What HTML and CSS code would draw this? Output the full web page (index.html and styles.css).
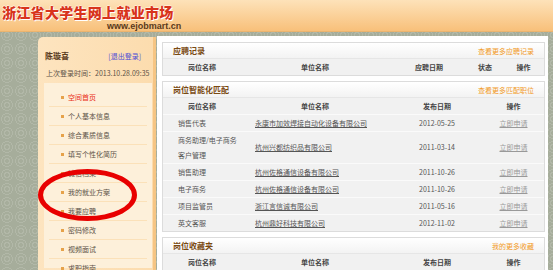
FILE: index.html
```html
<!DOCTYPE html>
<html lang="zh-cn">
<head>
    <meta charset="UTF-8">
    <meta name="viewport" content="width=device-width, initial-scale=1.0">
    <title>浙江省大学生网上就业市场</title>
    <link rel="stylesheet" href="styles.css">
</head>
<body>

    <!-- 顶部 -->
    <div class="topo">
        <div class="logo">浙江省大学生网上就业市场</div>
        <div class="site">www.ejobmart.cn</div>
    </div>

    <div class="corpo">
        <!-- 左侧菜单 -->
        <div class="lateral">
            <div class="usuario">
                <span class="nome">陈璇喜</span>
                <a class="sair" href="#">[退出登录]</a>
            </div>
            <div class="ultimo">上次登录时间：2013.10.28.09:35</div>
            <ul class="menu">
                <li class="ativo">空间首页</li>
                <li>个人基本信息</li>
                <li>综合素质信息</li>
                <li>填写个性化简历</li>
                <li>诚信档案</li>
                <li>我的就业方案</li>
                <li>我要应聘</li>
                <li>密码修改</li>
                <li>视频面试</li>
                <li>求职指南</li>
            </ul>
        </div>

        <!-- 内容 -->
        <div class="conteudo">
            <div class="painel">
                <div class="titulo">
                    <span>应聘记录</span>
                    <a href="#">查看更多应聘记录</a>
                </div>
                <div class="linha cab cinco">
                    <div class="c1">岗位名称</div>
                    <div class="c2">单位名称</div>
                    <div class="meio">应聘日期</div>
                    <div class="meio">状态</div>
                    <div class="meio">操作</div>
                </div>
            </div>

            <div class="painel">
                <div class="titulo">
                    <span>岗位智能化匹配</span>
                    <a href="#">查看更多匹配职位</a>
                </div>
                <div class="linha cab quatro">
                    <div class="c1">岗位名称</div>
                    <div class="c2">单位名称</div>
                    <div class="meio">发布日期</div>
                    <div class="meio">操作</div>
                </div>
                <div class="linha dado quatro">
                    <div class="d1">销售代表</div>
                    <div class="d2"><a href="#">永康市加效焊接自动化设备有限公司</a></div>
                    <div class="meio">2012-05-25</div>
                    <div class="meio"><a class="pedir" href="#">立即申请</a></div>
                </div>
                <div class="linha dado quatro alta">
                    <div class="d1">商务助理/电子商务<br>客户管理</div>
                    <div class="d2"><a href="#">杭州兴都纺织品有限公司</a></div>
                    <div class="meio">2011-03-14</div>
                    <div class="meio"><a class="pedir" href="#">立即申请</a></div>
                </div>
                <div class="linha dado quatro">
                    <div class="d1">销售助理</div>
                    <div class="d2"><a href="#">杭州佐格通信设备有限公司</a></div>
                    <div class="meio">2011-10-26</div>
                    <div class="meio"><a class="pedir" href="#">立即申请</a></div>
                </div>
                <div class="linha dado quatro">
                    <div class="d1">电子商务</div>
                    <div class="d2"><a href="#">杭州佐格通信设备有限公司</a></div>
                    <div class="meio">2011-10-26</div>
                    <div class="meio"><a class="pedir" href="#">立即申请</a></div>
                </div>
                <div class="linha dado quatro">
                    <div class="d1">项目监管员</div>
                    <div class="d2"><a href="#">浙江言信诚有限公司</a></div>
                    <div class="meio">2011-05-16</div>
                    <div class="meio"><a class="pedir" href="#">立即申请</a></div>
                </div>
                <div class="linha dado quatro">
                    <div class="d1">英文客服</div>
                    <div class="d2"><a href="#">杭州鼎好科技有限公司</a></div>
                    <div class="meio">2012-11-02</div>
                    <div class="meio"><a class="pedir" href="#">立即申请</a></div>
                </div>
            </div>

            <div class="painel">
                <div class="titulo">
                    <span>岗位收藏夹</span>
                    <a href="#">我的更多收藏</a>
                </div>
                <div class="linha cab quatro">
                    <div class="c1">岗位名称</div>
                    <div class="c2">单位名称</div>
                    <div class="meio">发布日期</div>
                    <div class="meio">操作</div>
                </div>
            </div>
        </div>
    </div>

    <!-- 红色圈注 -->
    <div class="circulo"></div>

</body>
</html>
```

FILE: styles.css
```css
body {
    margin: 0;
    width: 553px;
    height: 270px;
    overflow: hidden;
    position: relative;
    font-family: "Noto Sans CJK SC", "Liberation Sans", sans-serif;
    font-size: 7px;
    color: #555;
    background-color: #a6ad9b;
    background-image: radial-gradient(circle, transparent 0 2px, rgba(255,255,255,.13) 2px 3px, transparent 3px 5px, rgba(255,255,255,.13) 5px 6px, transparent 6px);
    background-size: 14px 14px;
}
a {
    color: #555;
}
.topo {
    height: 31px;
    background: linear-gradient(#fde2b9, #f8c07a);
    border-bottom: 1px solid #ebb46e;
    position: relative;
}
.logo {
    position: absolute;
    left: 2px;
    top: 2px;
    font-size: 14px;
    font-weight: 900;
    letter-spacing: 0.3px;
    color: #d8341c;
    text-shadow: 1px 1px 0 #fff, -1px 0 0 #fff7, 0 -1px 0 #fff7;
}
.site {
    position: absolute;
    left: 107px;
    top: 21px;
    font-family: "Liberation Sans", sans-serif;
    font-size: 9px;
    font-weight: bold;
    color: #5a3a1c;
}
.corpo {
    display: flex;
    align-items: flex-start;
    padding-top: 4px;
}
.lateral {
    width: 115px;
    height: 240px;
    margin-left: 38px;
    margin-top: 1px;
    background: linear-gradient(90deg, #fde4bf, #fcdcae);
    border-right: 3px solid #f6c584;
    border-radius: 5px 0 0 0;
}
.usuario {
    display: flex;
    justify-content: space-between;
    padding: 14px 12px 0 7px;
    line-height: 10px;
}
.nome {
    font-size: 8px;
    font-weight: bold;
    color: #5a3a1c;
}
.sair {
    color: #4d4dd6;
    text-decoration: none;
}
.ultimo {
    margin-top: 7px;
    padding-left: 8px;
    line-height: 10px;
    color: #5c5247;
}
.menu {
    list-style: none;
    margin: 5px 0 0 6px;
    padding: 5px 0 0;
    width: 108px;
    height: 180px;
    background: #fdf0da;
}
.menu li {
    margin: 0 5px;
    padding-left: 12px;
    height: 18px;
    line-height: 18px;
    border-bottom: 1px solid #fbe1b9;
    display: flex;
    align-items: center;
    gap: 4px;
    color: #5c5247;
}
.menu li::before {
    content: "";
    width: 3px;
    height: 3px;
    background: #e6a24a;
}
.menu li.ativo {
    color: #ea2e12;
}
.conteudo {
    margin-left: 1px;
    width: 383px;
    height: 235px;
    padding: 6px 3px 0 5px;
    background: #fff;
}
.painel {
    border: 1px solid #dcdcdc;
    margin-bottom: 5px;
    background: #f1f1f1;
}
.titulo {
    height: 15px;
    display: flex;
    justify-content: space-between;
    align-items: center;
    padding: 0 10px 0 10px;
    background: linear-gradient(#fff, #f3f3f3);
    border-bottom: 1px solid #e6e6e6;
}
.titulo span {
    font-size: 8px;
    font-weight: bold;
    color: #7a4a12;
}
.titulo a {
    color: #f29a1f;
    text-decoration: none;
}
.linha {
    display: grid;
    align-items: center;
    height: 16px;
    border-bottom: 1px solid #fafafa;
}
.linha:last-child {
    border-bottom: 0;
}
.quatro {
    grid-template-columns: 86px 142px 92px 61px;
}
.cinco {
    grid-template-columns: 86px 142px 76px 36px 41px;
}
.cab {
    font-weight: bold;
    color: #444;
}
.cab .c1 {
    padding-left: 25px;
}
.cab .c2 {
    padding-left: 52px;
}
.meio {
    text-align: center;
}
.dado {
    line-height: 15px;
}
.alta {
    height: 31px;
}
.d1 {
    padding-left: 15px;
}
.d2 {
    padding-left: 6px;
}
.pedir {
    color: #999;
}
.circulo {
    position: absolute;
    left: 38px;
    top: 169px;
    width: 99px;
    height: 52px;
    box-sizing: border-box;
    border: 5px solid #e80000;
    border-radius: 50%;
}
```
